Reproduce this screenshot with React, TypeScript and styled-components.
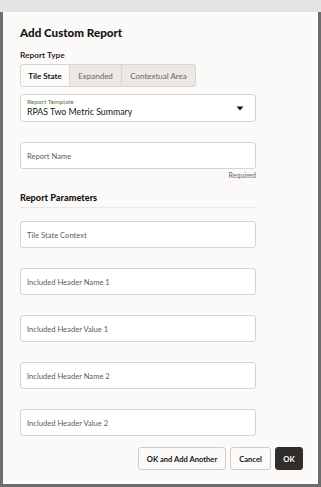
import React from "react";
import styled, { createGlobalStyle } from "styled-components";

const GlobalStyle = createGlobalStyle`
  html, body {
    margin: 0;
    padding: 0;
    background: #7e7c7a;
  }
  body {
    font-family: Lato, "Noto Sans", "Liberation Sans", sans-serif;
    color: #161513;
    -webkit-font-smoothing: antialiased;
  }
`;

const Page = styled.div`
  width: 321px;
  height: 487px;
  display: flex;
  flex-direction: column;
  background: #6f6d6b;
  overflow: hidden;
`;

const TopBand = styled.div`
  height: 12px;
  flex-shrink: 0;
  background: #e6e4e2;
`;

const Dialog = styled.div`
  flex: 1;
  margin: 0 3px 3px 3px;
  background: #fcfaf9;
  padding: 13px 15px 0 17px;
  display: flex;
  flex-direction: column;
`;

const Title = styled.h1`
  margin: 0;
  font-size: 11.6px;
  line-height: 16px;
  font-weight: 900;
`;

const GroupLabel = styled.div`
  margin-top: 8px;
  font-size: 8.3px;
  line-height: 12px;
  font-weight: 700;
  color: #2b2825;
`;

const Segmented = styled.div`
  margin-top: 3px;
  display: flex;
  align-self: flex-start;
  height: 23px;
  border: 1px solid #d8d5d2;
  border-radius: 3px;
  background: #ebe8e5;
  overflow: hidden;
  box-sizing: border-box;
`;

const Segment = styled.div<{ $active?: boolean; $w: number }>`
  width: ${(p) => p.$w}px;
  display: flex;
  align-items: center;
  justify-content: center;
  font-size: 8px;
  font-weight: ${(p) => (p.$active ? 700 : 400)};
  color: ${(p) => (p.$active ? "#161513" : "#6a6662")};
  background: ${(p) => (p.$active ? "#fcfbfa" : "transparent")};
  border-left: 1px solid ${(p) => (p.$active ? "transparent" : "#d8d5d2")};
  &:first-child {
    border-left: none;
  }
`;

const Field = styled.div<{ $top: number }>`
  margin-top: ${(p) => p.$top}px;
  width: 236px;
  height: 27px;
  box-sizing: border-box;
  background: #ffffff;
  border: 1px solid #d6d3d0;
  border-radius: 3px;
  padding: 0 6px;
  display: flex;
  align-items: center;
  flex-shrink: 0;
`;

const Placeholder = styled.span`
  font-size: 7.6px;
  color: #5f5b57;
`;

const SelectBody = styled.div`
  flex: 1;
  display: flex;
  flex-direction: column;
  justify-content: center;
`;

const FloatLabel = styled.span`
  font-size: 6.5px;
  line-height: 8px;
  color: #4f7a3a;
`;

const SelectValue = styled.span`
  font-size: 8.8px;
  line-height: 12px;
  color: #161513;
`;

const Caret = styled.svg`
  width: 8px;
  height: 8px;
  margin-right: 5px;
`;

const Hint = styled.div`
  width: 236px;
  text-align: right;
  margin-top: 1px;
  font-size: 7px;
  line-height: 10px;
  color: #6a6662;
`;

const SectionTitle = styled.h2`
  margin: 11px 0 0 0;
  font-size: 9.2px;
  line-height: 13px;
  font-weight: 900;
`;

const Divider = styled.div`
  margin-top: 3px;
  width: 236px;
  height: 1px;
  background: #ebe8e5;
`;

const Footer = styled.div`
  margin-top: 11px;
  display: flex;
  justify-content: flex-end;
  gap: 4px;
`;

const Button = styled.button<{ $primary?: boolean; $w: number }>`
  width: ${(p) => p.$w}px;
  height: 23px;
  padding: 0;
  border-radius: 3px;
  font-family: inherit;
  font-size: 7.6px;
  font-weight: 700;
  border: 1px solid ${(p) => (p.$primary ? "#312d2a" : "#cfcbc8")};
  background: ${(p) => (p.$primary ? "#312d2a" : "#fcfaf9")};
  color: ${(p) => (p.$primary ? "#ffffff" : "#161513")};
`;

const params = [
  "Tile State Context",
  "Included Header Name 1",
  "Included Header Value 1",
  "Included Header Name 2",
  "Included Header Value 2",
];

export default function App() {
  return (
    <>
      <GlobalStyle />
      <Page>
        <TopBand />
        <Dialog>
          <Title>Add Custom Report</Title>
          <GroupLabel>Report Type</GroupLabel>
          <Segmented>
            <Segment $active $w={48}>Tile State</Segment>
            <Segment $w={51}>Expanded</Segment>
            <Segment $w={73}>Contextual Area</Segment>
          </Segmented>
          <Field $top={7} style={{ height: 28 }}>
            <SelectBody>
              <FloatLabel>Report Template</FloatLabel>
              <SelectValue>RPAS Two Metric Summary</SelectValue>
            </SelectBody>
            <Caret viewBox="0 0 8 8">
              <path d="M0.5 2.5 L7.5 2.5 L4 6.5 Z" fill="#161513" />
            </Caret>
          </Field>
          <Field $top={20}>
            <Placeholder>Report Name</Placeholder>
          </Field>
          <Hint>Required</Hint>
          <SectionTitle>Report Parameters</SectionTitle>
          <Divider />
          {params.map((p, i) => (
            <Field key={p} $top={i === 0 ? 13 : 20}>
              <Placeholder>{p}</Placeholder>
            </Field>
          ))}
          <Footer>
            <Button $w={88}>OK and Add Another</Button>
            <Button $w={41}>Cancel</Button>
            <Button $primary $w={28}>OK</Button>
          </Footer>
        </Dialog>
      </Page>
    </>
  );
}
